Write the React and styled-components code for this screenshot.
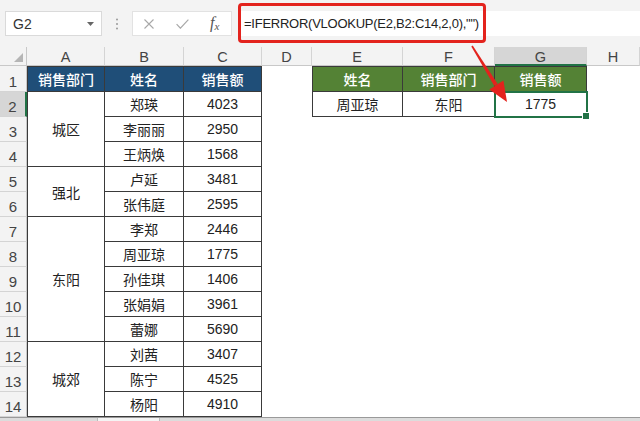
import React from 'react';
import { styled, createGlobalStyle } from 'styled-components';

const GlobalStyle = createGlobalStyle`
  * { box-sizing: border-box; }
  html, body { margin: 0; padding: 0; background: #fff; }
`;

const groups = [
  { dept: '城区', rows: [['郑瑛', 4023], ['李丽丽', 2950], ['王炳焕', 1568]] },
  { dept: '强北', rows: [['卢延', 3481], ['张伟庭', 2595]] },
  {
    dept: '东阳',
    rows: [['李郑', 2446], ['周亚琼', 1775], ['孙佳琪', 1406], ['张娟娟', 3961], ['蕾娜', 5690]],
  },
  { dept: '城郊', rows: [['刘茜', 3407], ['陈宁', 4525], ['杨阳', 4910]] },
];

const letters = ['A', 'B', 'C', 'D', 'E', 'F', 'G', 'H'];

const App = () => {
  // grid row 1 holds the column letters, so sheet row n sits on grid row n + 1
  let next = 3;
  const body = [];
  groups.forEach((g) => {
    body.push(
      <Cell key={g.dept} $col={2} $row={next} $span={g.rows.length} $left>
        {g.dept}
      </Cell>
    );
    g.rows.forEach(([name, amount], i) => {
      body.push(
        <Cell key={name} $col={3} $row={next + i}>
          {name}
        </Cell>,
        <Cell key={name + '-v'} $col={4} $row={next + i}>
          {amount}
        </Cell>
      );
    });
    next += g.rows.length;
  });

  return (
    <Page>
      <GlobalStyle />
      <Toolbar>
        <NameBox>
          G2
          <svg width="7" height="4" viewBox="0 0 7 4">
            <path d="M0 0h7L3.5 4z" fill="#666" />
          </svg>
        </NameBox>
        <Dots width="4" height="12" viewBox="0 0 4 12">
          <circle cx="2" cy="1.5" r="1" fill="#9a9a9a" />
          <circle cx="2" cy="6" r="1" fill="#9a9a9a" />
          <circle cx="2" cy="10.5" r="1" fill="#9a9a9a" />
        </Dots>
        <ButtonsBox>
          <IconSlot>
            <svg width="10" height="10" viewBox="0 0 10 10">
              <path d="M0.5 0.5l9 9M9.5 0.5l-9 9" stroke="#a8a8a8" strokeWidth="1.1" fill="none" />
            </svg>
          </IconSlot>
          <IconSlot>
            <svg width="13" height="10" viewBox="0 0 13 10">
              <path d="M0.6 5.2l3.8 4 8-8.6" stroke="#a8a8a8" strokeWidth="1.2" fill="none" />
            </svg>
          </IconSlot>
          <IconSlot>
            <Fx>
              f<sub>x</sub>
            </Fx>
          </IconSlot>
        </ButtonsBox>
        <FormulaBar>=IFERROR(VLOOKUP(E2,B2:C14,2,0),"")</FormulaBar>
      </Toolbar>

      <Sheet>
        <Corner>
          <svg width="9" height="9" viewBox="0 0 9 9">
            <path d="M9 0v9H0z" fill="#b5b5b5" />
          </svg>
        </Corner>
        {letters.map((l, i) => (
          <ColHead key={l} $col={i + 2} $selected={l === 'G'}>
            {l}
          </ColHead>
        ))}
        {Array.from({ length: 14 }, (_, i) => (
          <RowHead key={i} $row={i + 2} $selected={i === 1}>
            {i + 1}
          </RowHead>
        ))}

        <Cell $col={2} $row={2} $tone="blue" $left $top>销售部门</Cell>
        <Cell $col={3} $row={2} $tone="blue" $top>姓名</Cell>
        <Cell $col={4} $row={2} $tone="blue" $top>销售额</Cell>
        {body}

        <Cell $col={6} $row={2} $tone="green" $left $top>姓名</Cell>
        <Cell $col={7} $row={2} $tone="green" $top>销售部门</Cell>
        <Cell $col={8} $row={2} $tone="green" $top>销售额</Cell>
        <Cell $col={6} $row={3} $left>周亚琼</Cell>
        <Cell $col={7} $row={3}>东阳</Cell>
        <Cell $col={8} $row={3} $selected>1775</Cell>
      </Sheet>

      <TabBar>
        <Tab />
      </TabBar>

      <Callout />
      <Arrow width="640" height="421" viewBox="0 0 640 421">
        <polygon points="472.7,45.6 471.3,46.4 494.3,86.1 497.7,83.9" fill="#e3231d" />
        <polygon points="507,102 489.4,89.4 503.4,80.6" fill="#e3231d" />
      </Arrow>
    </Page>
  );
};

const Page = styled.div`
  position: relative;
  width: 640px;
  height: 421px;
  overflow: hidden;
  display: flex;
  flex-direction: column;
  background: #fff;
  font-family: 'Liberation Sans', 'Noto Sans CJK SC', sans-serif;
  color: #222;
`;

const Toolbar = styled.div`
  flex-shrink: 0;
  height: 47px;
  display: flex;
  align-items: center;
  padding: 0 0 0 5px;
  background: #f3f3f3;
`;

const NameBox = styled.div`
  width: 97px;
  height: 25px;
  display: flex;
  align-items: center;
  justify-content: space-between;
  padding: 0 7px 0 7px;
  background: #fff;
  border: 1px solid #dadada;
  font-size: 14px;
  color: #333;
`;

const Dots = styled.svg`
  margin: 0 13px 0 13px;
`;

const ButtonsBox = styled.div`
  width: 100px;
  height: 25px;
  display: flex;
  align-items: center;
  background: #fff;
  border: 1px solid #e2e2e2;
`;

const IconSlot = styled.div`
  width: 34px;
  display: flex;
  justify-content: center;
  align-items: center;
`;

const Fx = styled.span`
  font-family: 'Liberation Serif', serif;
  font-style: italic;
  font-size: 16px;
  color: #555;
  line-height: 1;

  sub {
    font-size: 11px;
    vertical-align: -2px;
  }
`;

const FormulaBar = styled.div`
  flex: 1;
  height: 25px;
  margin-left: 6px;
  padding-left: 6px;
  display: flex;
  align-items: center;
  background: #fff;
  font-size: 13px;
  letter-spacing: -0.25px;
  color: #222;
  white-space: nowrap;
`;

const Sheet = styled.div`
  flex-shrink: 0;
  display: grid;
  grid-template-columns: 27px 78px 79px 78px 50px 91px 92px 92px 53px;
  grid-template-rows: 19px 26px repeat(13, 25px);
  background: #fff;
`;

const Corner = styled.div`
  grid-column: 1;
  grid-row: 1;
  display: flex;
  align-items: flex-end;
  justify-content: flex-end;
  padding: 0 3px 3px 0;
  background: #f3f3f3;
  border-right: 1px solid #c8c8c8;
  border-bottom: 1px solid #c8c8c8;
`;

const ColHead = styled.div`
  grid-column: ${(p) => p.$col};
  grid-row: 1;
  display: flex;
  align-items: center;
  justify-content: center;
  padding-top: 2px;
  font-size: 14.5px;
  color: #444;
  background: ${(p) => (p.$selected ? '#d6d6d6' : '#f3f3f3')};
  border-right: 1px solid #d4d4d4;
  border-bottom: ${(p) => (p.$selected ? '2px solid #217346' : '1px solid #c8c8c8')};
`;

const RowHead = styled.div`
  grid-column: 1;
  grid-row: ${(p) => p.$row};
  display: flex;
  align-items: flex-end;
  justify-content: center;
  padding-bottom: 1px;
  font-size: 15px;
  color: #444;
  background: ${(p) => (p.$selected ? '#d6d6d6' : '#f3f3f3')};
  border-bottom: 1px solid #d4d4d4;
  border-right: ${(p) => (p.$selected ? '2px solid #217346' : '1px solid #c8c8c8')};
`;

const tones = {
  blue: '#1f4e78',
  green: '#548235',
};

const Cell = styled.div`
  position: relative;
  grid-column: ${(p) => p.$col};
  grid-row: ${(p) => `${p.$row} / span ${p.$span || 1}`};
  display: flex;
  align-items: center;
  justify-content: center;
  font-size: 14px;
  font-weight: ${(p) => (p.$tone ? 500 : 400)};
  color: ${(p) => (p.$tone ? '#fff' : '#222')};
  background: ${(p) => tones[p.$tone] || '#fff'};
  border-right: 1px solid #3a3a3a;
  border-bottom: 1px solid #3a3a3a;
  border-left: ${(p) => (p.$left ? '1px solid #3a3a3a' : 'none')};
  border-top: ${(p) => (p.$top ? '1px solid #3a3a3a' : 'none')};
  outline: ${(p) => (p.$selected ? '2px solid #217346' : 'none')};
  outline-offset: -1px;

  &::after {
    content: '';
    display: ${(p) => (p.$selected ? 'block' : 'none')};
    position: absolute;
    right: -4px;
    bottom: -4px;
    width: 6px;
    height: 6px;
    background: #217346;
    border: 1px solid #fff;
  }
`;

const TabBar = styled.div`
  flex: 1;
  display: flex;
  background: #dcdcdc;
  border-top: 1px solid #9a9a9a;
`;

const Tab = styled.div`
  width: 63px;
  margin-left: 97px;
  background: #f4f4f4;
  border-left: 1px solid #bbb;
  border-right: 1px solid #bbb;
`;

const Callout = styled.div`
  position: absolute;
  left: 238px;
  top: 3px;
  width: 248px;
  height: 40px;
  border: 3px solid #e3231d;
  border-radius: 4px;
  pointer-events: none;
`;

const Arrow = styled.svg`
  position: absolute;
  left: 0;
  top: 0;
  pointer-events: none;
`;

export default App;
